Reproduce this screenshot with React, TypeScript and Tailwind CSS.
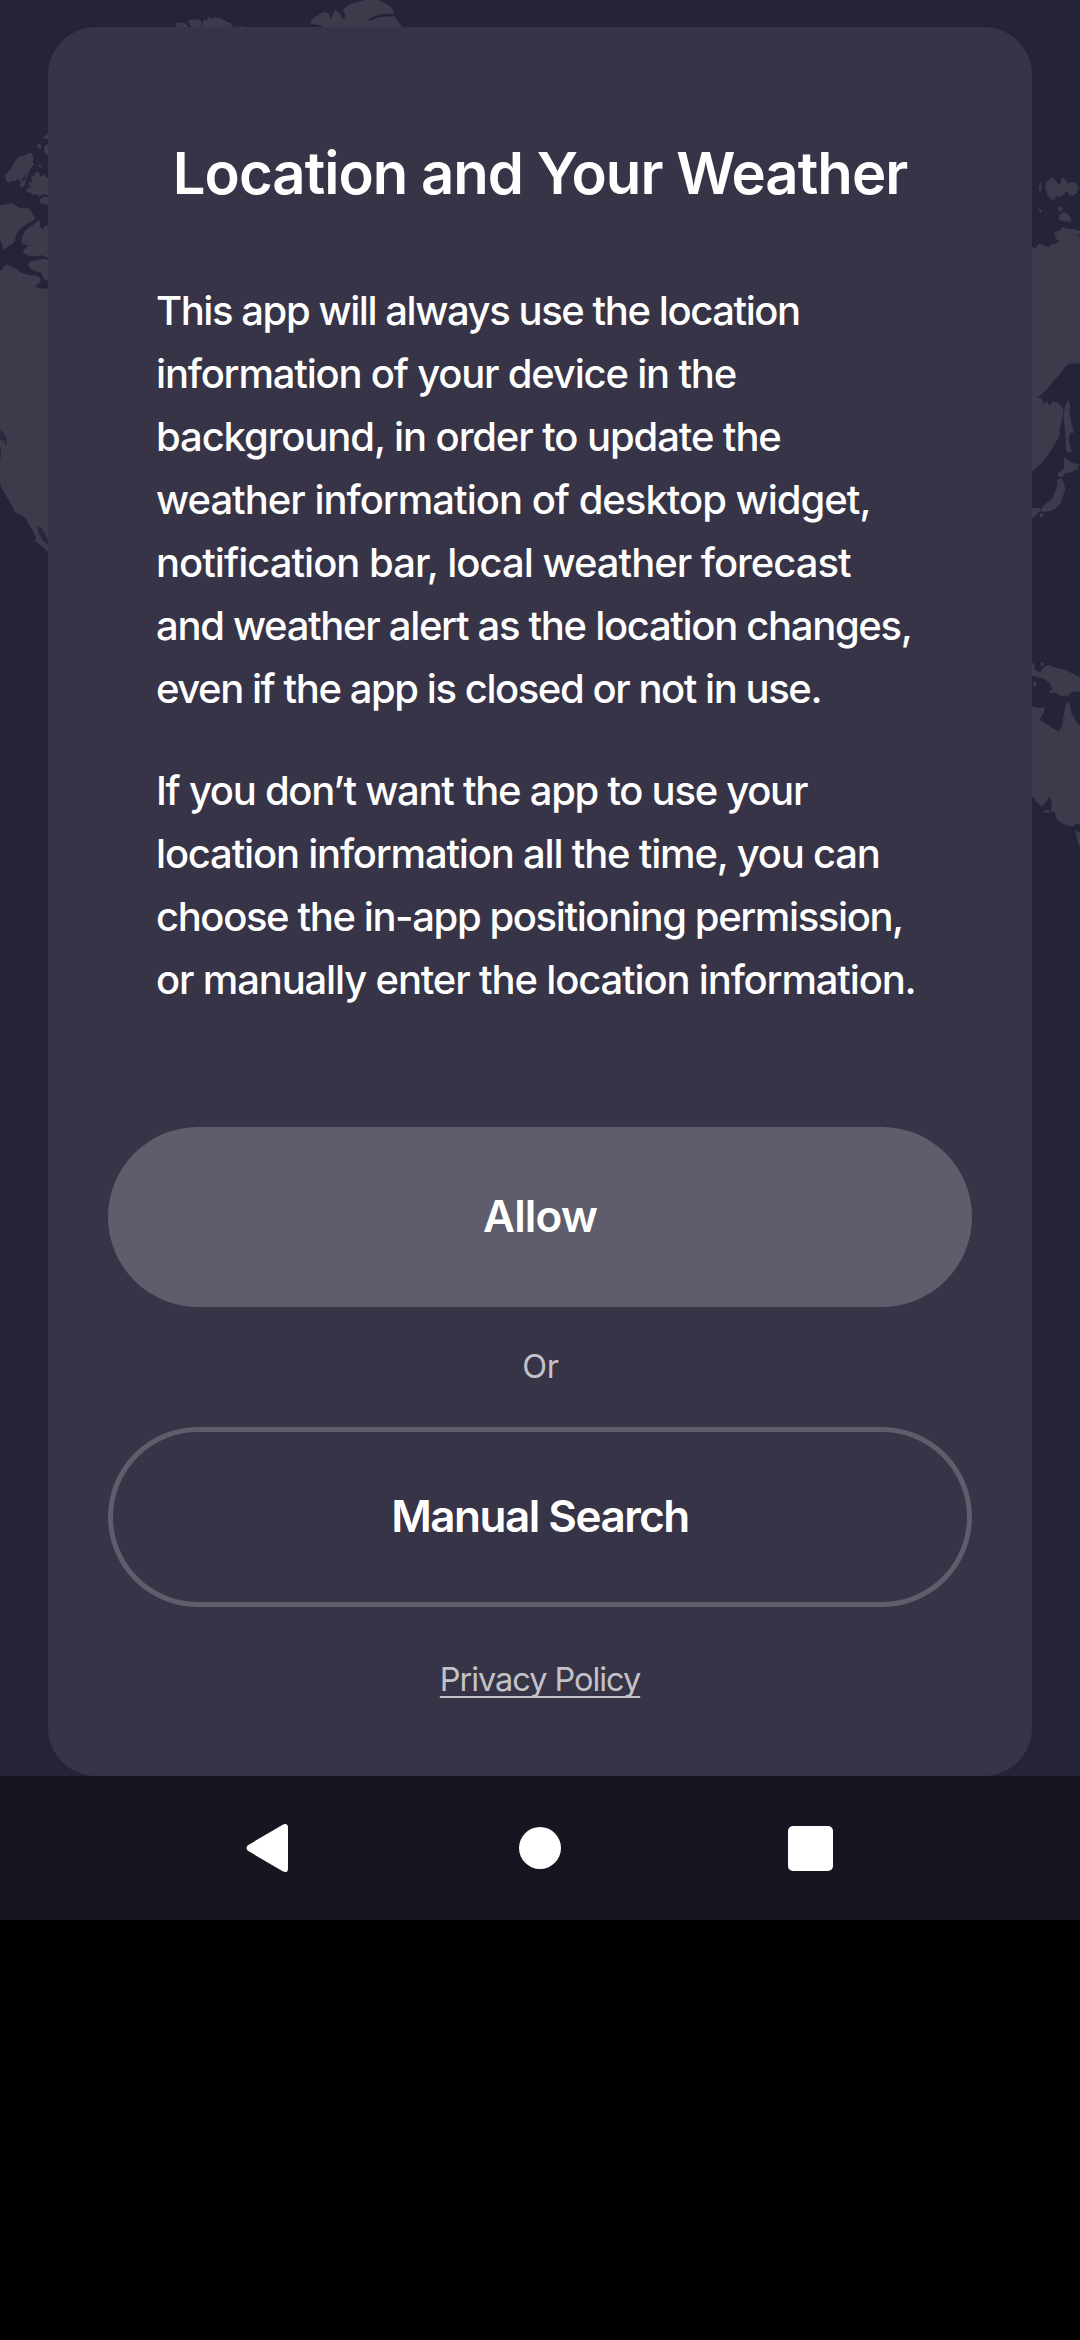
function WorldMap() {
  return (
    <svg
      className="absolute inset-0 h-full w-full"
      viewBox="0 0 1080 1776"
      fill="#3d3b4b"
      aria-hidden="true"
    >
      {/* Arctic islands */}
      <g transform="translate(160 0) scale(0.33333)">
        <path d="M48 70l6-4 8 4 8-2 8 4 6 8-4 10H54l-4-8zM84 66l6-8 10 1 12-1 12 6 2 12-4 14H98l-4-12zM128 70l4-12 8 4 6-10 10 4 8-6 8 5 8-2 6 6 10 2 4 6 12 2 4 6 2 20h-90zM222 72l4 8-2 8zM231 72l3 8v8h-4zM240 77l8 3v6h-8z" />
        <path d="M450 66L462 54L476 44L492 35L506 40L512 58L520 40L528 30L540 42L552 60L556 44L548 30L560 20L570 12L584 8L600 4L616 0H655L672 8L690 18L702 34L698 41L660 43L634 52L624 60L632 62L656 52L704 48L712 62L726 80V90H500L480 76L456 72Z" />
      </g>

      {/* North America */}
      <g transform="translate(0 120) scale(0.33333)">
        <path d="M130 54l8-10 12-4v14l-12 4zM110 78l6-8 6 6 4 8-8 4zM132 84l6-10 12-4v38l-10-2-8-10zM112 138l8-4 8 4-6 5z" />
        <path d="M16 166L24 156L32 150L38 136L48 120L60 108L78 106L86 98L94 100L100 110L98 126L102 134L94 142L86 158L82 172L74 180L78 160L68 176L62 186L54 176L46 184L36 182L28 188L18 182ZM58 196L68 180L78 180L76 192L68 203ZM78 208L92 200L84 190L96 184L92 170L104 166L106 156L116 156L120 170L132 164L140 172L150 172V224L136 226L128 222L118 230L110 222L98 226L92 218L80 216ZM118 240L128 232L150 230V254L132 252L120 248Z" />
        <path d="M0 256L14 254L36 250L52 260L64 266L78 262L90 268L98 284L106 294L98 304L80 312L62 326L50 340L46 356L42 368L26 378L14 390L8 380L4 366L0 360ZM64 362L68 346L76 332L88 322L104 312L114 300L120 306L120 322L128 328L136 318L150 316V412L140 412L124 406L104 408L88 408L72 400L68 394L78 384L86 376L74 374L66 370ZM84 434L92 424L112 420L130 416L150 420V482L134 480L128 470L124 458L108 454L94 448Z" />
        <path d="M0 452L8 448L10 440L20 434L36 440L48 446L60 456L74 462L90 466L104 466L116 470L124 480L118 488L106 498L114 504L130 506L150 505V1300L134 1288L118 1272L104 1262L108 1254L100 1236L88 1216L78 1196L62 1184L46 1178L36 1158L26 1140L14 1120L4 1100L0 1090Z" />
        <path
          fill="#292739"
          d="M0 930L12 940L20 956L19 974L15 974L14 962L4 962L0 958ZM0 980L3 996L1 1020H0ZM111 1220L124 1222L134 1240L145 1262V1276L130 1262L118 1246Z"
        />
      </g>

      {/* Siberia, East Asia and Japan */}
      <g transform="translate(1000 160) scale(0.33333)">
        <path d="M118 72l5-6 2 18-4 12-4-8zM114 146l6 0 6 8-4 4zM174 144l6-6 6 6-2 10-6 2zM178 166L190 156L202 160L210 170L215 184L202 186L188 182L178 180Z" />
        <path d="M138 90L136 76L142 62L156 52L166 60L176 74L182 68L186 52L196 58L204 72L216 66L228 70L236 84L230 100L218 108L206 102L200 92L192 104L178 110L168 108L162 122L152 116L142 104Z" />
        <path d="M90 260L106 264L118 250L132 256L146 262L152 254L166 252L178 244L164 236L172 230L162 222L168 214L180 214L186 202L204 206L222 208L245 214V222L228 226L245 232V610L208 611L194 622L180 642L160 664L140 688L122 706L112 712L126 716L132 732L140 722L150 738L158 722L172 728L184 738L190 750L186 780L180 800L178 828L166 850L150 876L130 902L112 922L96 936H90Z" />
        <path d="M196 738L204 720L210 734L209 760L214 790L222 818L210 820L206 840L210 862L216 872L208 880L198 872L197 840L194 800L190 765ZM190 888L206 904L220 910L238 912L232 926L216 936L196 940L186 952L176 950L172 938L188 932L194 914ZM170 960L184 954L192 970L196 990L188 1008L182 1030L166 1046L148 1054L130 1056L122 1048L136 1032L156 1016L166 994L172 976ZM90 1044L118 1044L124 1052L112 1060L104 1072L90 1070ZM118 1060L132 1062L122 1076Z" />
      </g>

      {/* New Guinea and Australia */}
      <g transform="translate(1000 540) scale(0.33333)">
        <path d="M90 362L102 372L104 388L120 398L130 384L146 374L168 384L196 390L220 402L245 416V454L214 456L208 466L184 468L166 458L146 460L156 446L150 430L132 416L112 412L90 406ZM99 430l6-6 6 4-4 10-6 3zM120 372l6-6 6 4-4 10z" />
        <path d="M90 498L120 504L134 502L132 518L124 528L118 540L134 548L156 564L176 574L186 562L190 530L196 498L202 484L210 496L214 520L224 534L234 552L245 560V856L230 850L216 860L190 852L172 840L164 818L152 812L156 790L148 770L138 786L124 800L108 784L98 770L90 762ZM226 870L245 880V930L234 910ZM130 814l8-4 14 4-4 4-12 0z" />
      </g>
    </svg>
  );
}

const firstParagraph = [
  { text: "This app will always use the location", tracking: "tracking-[-1.43px]" },
  { text: "information of your device in the", tracking: "tracking-[-1.2px]" },
  { text: "background, in order to update the", tracking: "tracking-[-1.1px]" },
  { text: "weather information of desktop widget,", tracking: "tracking-[-1px]" },
  { text: "notification bar, local weather forecast", tracking: "tracking-[-1px]" },
  { text: "and weather alert as the location changes,", tracking: "tracking-[-1.32px]" },
  { text: "even if the app is closed or not in use.", tracking: "tracking-[-1.44px]" },
];

const secondParagraph = [
  { text: "If you don’t want the app to use your", tracking: "tracking-[-1.28px]" },
  { text: "location information all the time, you can", tracking: "tracking-[-1.2px]" },
  { text: "choose the in-app positioning permission,", tracking: "tracking-[-1.39px]" },
  { text: "or manually enter the location information.", tracking: "tracking-[-1.16px]" },
];

function Paragraph({ lines }: { lines: { text: string; tracking: string }[] }) {
  return (
    <p className="text-[40px] leading-[63px] font-medium whitespace-nowrap">
      {lines.map((line) => (
        <span key={line.text} className={`block ${line.tracking}`}>
          {line.text}
        </span>
      ))}
    </p>
  );
}

function NavigationBar() {
  return (
    <nav className="flex h-36 items-center justify-center bg-[#171520]">
      <button aria-label="Back" className="flex w-[270px] justify-center">
        <svg className="h-12 w-12" viewBox="0 0 48 48" fill="white">
          <path d="M37.2 .4Q42 -1.2 42 3.6V44.4Q42 49.2 37.2 47.6L1.6 26.6Q-.6 24 1.6 21.4Z" />
        </svg>
      </button>
      <button aria-label="Home" className="flex w-[270px] justify-center">
        <span className="h-[42px] w-[42px] rounded-full bg-white" />
      </button>
      <button aria-label="Recent apps" className="flex w-[270px] justify-center">
        <span className="h-[45px] w-[45px] rounded-[5px] bg-white" />
      </button>
    </nav>
  );
}

export default function App() {
  return (
    <div className="h-[2340px] w-[1080px] overflow-hidden bg-black font-['Inter',sans-serif] text-white">
      <div className="relative h-[1776px] bg-[#252338] px-12 pt-[27px]">
        <WorldMap />
        <main className="relative flex h-[1749px] flex-col rounded-[48px] bg-[#363446] px-[60px] pt-[110px]">
          <h1 className="text-center text-[58px] leading-[72px] font-semibold tracking-[-0.95px] whitespace-nowrap">
            Location and Your Weather
          </h1>
          <div className="mt-[70px] flex flex-col gap-[39px] pl-12">
            <Paragraph lines={firstParagraph} />
            <Paragraph lines={secondParagraph} />
          </div>
          <button className="mt-[116px] h-[180px] shrink-0 rounded-full bg-[#5e5d6b] pb-[2px] text-[44px] font-semibold tracking-[-0.8px]">
            Allow
          </button>
          <div className="flex h-[120px] items-center justify-center pl-px text-[32.5px] tracking-[-0.3px] text-[#c3c2c8]">
            Or
          </div>
          <button className="h-[180px] shrink-0 rounded-full border-[5px] border-[#5e5d6b] pb-[2px] text-[44px] font-semibold tracking-[-1.5px]">
            Manual Search
          </button>
          <a
            href="#privacy"
            className="mt-[53px] self-center text-[32.5px] leading-10 tracking-[-1.05px] whitespace-nowrap text-[#c3c2c8] underline decoration-2 underline-offset-[5px] [text-decoration-skip-ink:none]"
          >
            Privacy Policy
          </a>
        </main>
      </div>
      <NavigationBar />
    </div>
  );
}
